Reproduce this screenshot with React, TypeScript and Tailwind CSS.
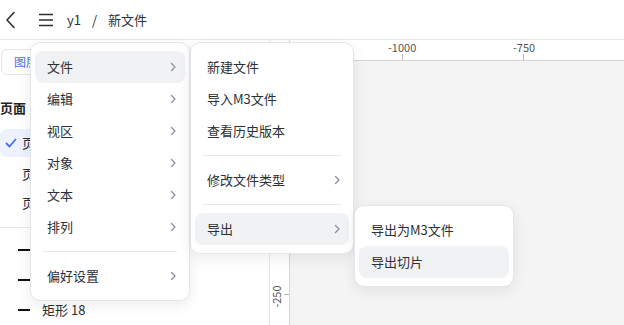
import React from 'react';

const FONT = '"Noto Sans CJK SC", "Noto Sans", sans-serif';

const Chevron: React.FC = () => (
  <svg width="8" height="10" viewBox="0 0 8 10" className="text-[#8a8f99]">
    <path d="M2.5 1.5 L6 5 L2.5 8.5" fill="none" stroke="currentColor" strokeWidth="1.3" strokeLinecap="round" strokeLinejoin="round" />
  </svg>
);

type Item = { label: string; sub?: boolean; active?: boolean } | 'sep';

const Menu: React.FC<{ items: Item[]; className: string }> = ({ items, className }) => (
  <div
    className={`absolute rounded-[10px] bg-white border border-[#e4e6ea] shadow-[0_4px_14px_rgba(0,0,0,0.08)] px-1 py-2 ${className}`}
  >
    {items.map((it, i) =>
      it === 'sep' ? (
        <div key={i} className="my-2 mx-2 h-px bg-[#e6e7eb]" />
      ) : (
        <div
          key={i}
          className={`h-8 flex items-center justify-between pl-3 pr-2 rounded-lg text-[13px] text-[#2b2f36] ${it.active ? 'bg-[#f1f2f4]' : ''}`}
        >
          <span>{it.label}</span>
          {it.sub && <Chevron />}
        </div>
      )
    )}
  </div>
);

const App: React.FC = () => {
  return (
    <div className="relative w-[624px] h-[325px] overflow-hidden bg-white flex flex-col" style={{ fontFamily: FONT }}>
      {/* Header */}
      <div className="h-10 shrink-0 flex items-center border-b border-[#e8e9ec]">
        <svg width="20" height="20" viewBox="0 0 20 20" className="ml-[1px] text-[#2b2f36]">
          <path d="M13 2.5 L6 10 L13 17.5" fill="none" stroke="currentColor" strokeWidth="1.6" strokeLinecap="round" strokeLinejoin="round" />
        </svg>
        <svg width="16" height="16" viewBox="0 0 16 16" className="ml-[17px] text-[#2b2f36]">
          <path d="M1 2.5 H15 M1 8 H15 M1 13.5 H15" fill="none" stroke="currentColor" strokeWidth="1.6" />
        </svg>
        <span className="ml-[13px] text-[13px] text-[#2b2f36]">y1</span>
        <span className="ml-[11px] text-[13px] text-[#2b2f36]">/</span>
        <span className="ml-[11px] text-[13px] text-[#2b2f36]">新文件</span>
      </div>

      <div className="flex flex-1 min-h-0">
        {/* Sidebar */}
        <div className="w-[270px] shrink-0 border-r border-[#e6e7eb] flex flex-col">
          <div className="mt-[9px] ml-[1px] mr-3 h-[26px] rounded-md border border-[#e4e6ea] flex items-center px-3 text-[12px] text-[#4e6ef2]">
            图层
          </div>
          <div className="mt-[23px] text-[13px] font-bold text-[#1f2329]">页面</div>
          <div className="mt-[12px] h-[28px] mr-2 rounded-md bg-[#eef2fe] flex items-center text-[13px] text-[#2b2f36]">
            <svg width="12" height="12" viewBox="0 0 12 12" className="ml-[5px] text-[#4e6ef2]">
              <path d="M1.5 6.5 L4.5 9.5 L10.5 2.5" fill="none" stroke="currentColor" strokeWidth="1.8" strokeLinecap="round" strokeLinejoin="round" />
            </svg>
            <span className="ml-[5px]">页面 1</span>
          </div>
          <div className="mt-[2px] h-[30px] flex items-center pl-[22px] text-[13px] text-[#2b2f36]">页面 2</div>
          <div className="h-[30px] flex items-center pl-[22px] text-[13px] text-[#2b2f36]">页面 3</div>
          <div className="mt-[9px] h-px bg-[#e6e7eb]" />
          <div className="flex flex-col">
            {['矩形 20', '矩形 19', '矩形 18'].map((n) => (
              <div key={n} className="h-[30px] flex items-center text-[13px] text-[#2b2f36] first:mt-[7px]">
                <span className="ml-[18px] w-[12px] h-[2px] bg-[#111]" />
                <span className="ml-[12px]">{n}</span>
              </div>
            ))}
          </div>
        </div>

        {/* Canvas + rulers */}
        <div className="flex-1 flex flex-col min-w-0">
          <div className="h-[21px] shrink-0 flex border-b border-[#d4d5d8]">
            <div className="w-5 shrink-0 border-r border-[#d4d5d8]" />
            <div className="flex-1 relative text-[11px] text-[#555]">
              <span className="absolute left-[98px] top-[-1px]">-1000</span>
              <span className="absolute left-[112px] bottom-0 h-[6px] w-px bg-[#b8b9bc]" />
              <span className="absolute left-[223px] top-[-1px]">-750</span>
              <span className="absolute left-[233px] bottom-0 h-[6px] w-px bg-[#b8b9bc]" />
            </div>
          </div>
          <div className="flex-1 flex min-h-0">
            <div className="w-5 shrink-0 border-r border-[#d4d5d8] relative">
              <span className="absolute left-[-5px] top-[230px] text-[11px] text-[#555] -rotate-90 leading-none">-250</span>
              <span className="absolute right-0 top-[233px] w-[5px] h-px bg-[#b8b9bc]" />
            </div>
            <div className="flex-1 bg-[#f4f4f4]" />
          </div>
        </div>
      </div>

      {/* Menus */}
      <Menu
        className="left-[30px] top-[42px] w-[160px]"
        items={[
          { label: '文件', sub: true, active: true },
          { label: '编辑', sub: true },
          { label: '视区', sub: true },
          { label: '对象', sub: true },
          { label: '文本', sub: true },
          { label: '排列', sub: true },
          'sep',
          { label: '偏好设置', sub: true },
        ]}
      />
      <Menu
        className="left-[190px] top-[42px] w-[164px]"
        items={[
          { label: '新建文件' },
          { label: '导入M3文件' },
          { label: '查看历史版本' },
          'sep',
          { label: '修改文件类型', sub: true },
          'sep',
          { label: '导出', sub: true, active: true },
        ]}
      />
      <Menu
        className="left-[354px] top-[205px] w-[160px]"
        items={[{ label: '导出为M3文件' }, { label: '导出切片', active: true }]}
      />
    </div>
  );
};

export default App;
